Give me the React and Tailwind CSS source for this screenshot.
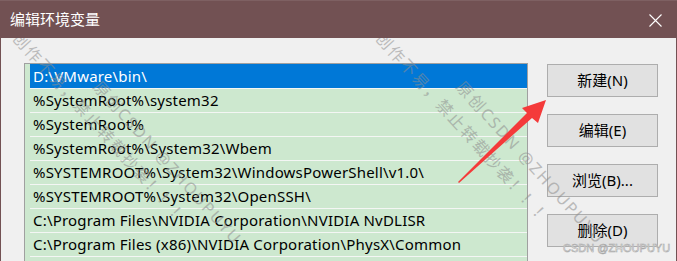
import React from "react";

const rows = [
  "D:\\VMware\\bin\\",
  "%SystemRoot%\\system32",
  "%SystemRoot%",
  "%SystemRoot%\\System32\\Wbem",
  "%SYSTEMROOT%\\System32\\WindowsPowerShell\\v1.0\\",
  "%SYSTEMROOT%\\System32\\OpenSSH\\",
  "C:\\Program Files\\NVIDIA Corporation\\NVIDIA NvDLISR",
  "C:\\Program Files (x86)\\NVIDIA Corporation\\PhysX\\Common",
  "C:\\Program Files\\dotnet\\",
];

const buttons = ["新建(N)", "编辑(E)", "浏览(B)...", "删除(D)"];

function Watermark({ left, top }) {
  return (
    <div
      className="absolute origin-top-left rotate-[48deg] pointer-events-none text-[16px] leading-[27px] tracking-[2px] text-[#8e8e8e] opacity-55 whitespace-nowrap"
      style={{ left, top }}
    >
      <div className="pl-[90px]">原创CSDN @ZHOUPUYU</div>
      <div>创作不易，禁止转载抄袭！！！</div>
    </div>
  );
}

export default function App() {
  return (
    <div
      className="w-[677px] h-[261px] overflow-hidden flex flex-col"
      style={{ fontFamily: '"Noto Sans", "Noto Sans CJK SC", sans-serif' }}
    >
      <div className="h-[38px] shrink-0 bg-[#725153] border-t border-[#7e6062] flex items-center justify-between pl-[10px] pr-[15px] text-white text-[15px]">
        <span>编辑环境变量</span>
        <svg width="13" height="13" viewBox="0 0 13 13" className="mt-[1px]">
          <path d="M0.5 0.5 L12.5 12.5 M12.5 0.5 L0.5 12.5" stroke="#ffffff" strokeWidth="1.1" fill="none" />
        </svg>
      </div>
      <div className="relative flex-1 bg-[#f0f0f0] border-x border-[#725153] flex items-start pt-[25px] pl-[23px] gap-[19px] overflow-hidden">
        <div className="w-[504px] shrink-0 border border-[#a0a0a0] bg-[#cde8cf] pl-[5px] text-[15px] tracking-[0.2px]">
          {rows.map((r, i) => (
            <div
              key={i}
              className={
                "h-[24px] flex items-center pl-[3px] whitespace-nowrap " +
                (i === 0 ? "bg-[#0078d7] text-white" : "border-t border-[#f4f6f4] text-black")
              }
            >
              {r}
            </div>
          ))}
        </div>
        <div className="mt-[1px] flex flex-col gap-[17px]">
          {buttons.map((b) => (
            <div
              key={b}
              className="w-[111px] h-[33px] bg-[#e1e1e1] border border-[#adadad] flex items-center justify-center text-[15px] text-black"
            >
              {b}
            </div>
          ))}
        </div>

        <Watermark left={45} top={-30} />
        <Watermark left={408} top={-30} />

        <svg className="absolute left-0 top-0 pointer-events-none" width="677" height="223" viewBox="0 38 677 223">
          <polygon
            points="457,182 526,113 521,108 545,100 537,123 531,118 458,183"
            fill="#f43a3a"
          />
        </svg>

        <div
          className="absolute left-[562px] top-[202px] text-[11px] text-white whitespace-nowrap pointer-events-none"
          style={{ WebkitTextStroke: "0.6px #a8a8a8", fontFamily: '"Liberation Sans", sans-serif' }}
        >
          CSDN @ZHOUPUYU
        </div>
      </div>
    </div>
  );
}
